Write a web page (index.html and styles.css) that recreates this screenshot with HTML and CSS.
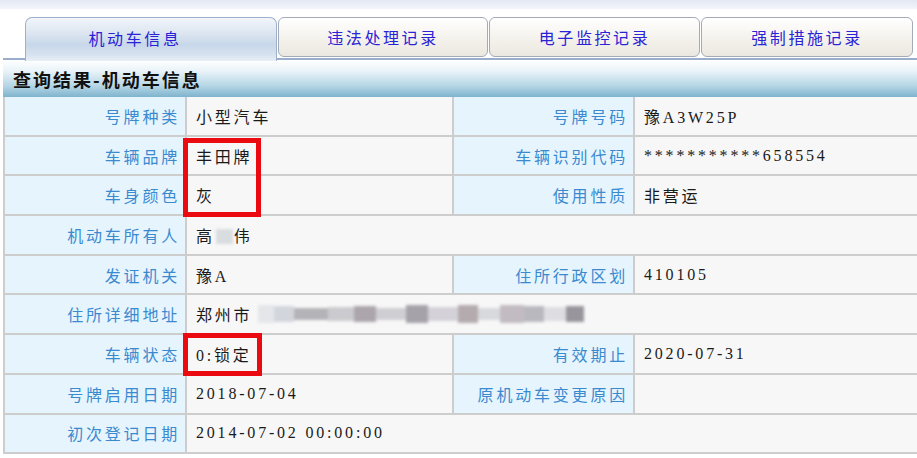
FILE: index.html
```html
<!DOCTYPE html>
<html lang="zh-CN">
<head>
<meta charset="utf-8">
<title>机动车信息</title>
<link rel="stylesheet" href="styles.css">
</head>
<body>
<div class="page">
  <div class="topband"></div>
  <div class="tabs">
    <div class="tab active">机动车信息</div>
    <div class="tab">违法处理记录</div>
    <div class="tab">电子监控记录</div>
    <div class="tab">强制措施记录</div>
  </div>
  <div class="panel">
    <div class="panel-title">查询结果-机动车信息</div>
    <table class="info">
      <colgroup>
        <col class="c1"><col class="c2"><col class="c3"><col class="c4">
      </colgroup>
      <tr><td class="lbl">号牌种类</td><td class="val">小型汽车</td><td class="lbl">号牌号码</td><td class="val">豫A3W25P</td></tr>
      <tr><td class="lbl">车辆品牌</td><td class="val">丰田牌</td><td class="lbl">车辆识别代码</td><td class="val">***********658554</td></tr>
      <tr><td class="lbl">车身颜色</td><td class="val">灰</td><td class="lbl">使用性质</td><td class="val">非营运</td></tr>
      <tr><td class="lbl">机动车所有人</td><td class="val" colspan="3">高<span class="blur-char"></span>伟</td></tr>
      <tr><td class="lbl">发证机关</td><td class="val">豫A</td><td class="lbl">住所行政区划</td><td class="val">410105</td></tr>
      <tr><td class="lbl">住所详细地址</td><td class="val" colspan="3"><span class="addr">郑州市<span class="blur-addr"><i class="b1"></i><i class="b2"></i><i class="b3"></i><i class="b4"></i><i class="b5"></i><i class="b6"></i><i class="b7"></i><i class="b8"></i><i class="b9"></i><i class="b10"></i><i class="b11"></i><i class="b12"></i><i class="b13"></i><i class="b14"></i></span></span></td></tr>
      <tr><td class="lbl">车辆状态</td><td class="val">0:锁定</td><td class="lbl">有效期止</td><td class="val">2020-07-31</td></tr>
      <tr><td class="lbl">号牌启用日期</td><td class="val">2018-07-04</td><td class="lbl">原机动车变更原因</td><td class="val"></td></tr>
      <tr><td class="lbl">初次登记日期</td><td class="val" colspan="3">2014-07-02 00:00:00</td></tr>
    </table>
  </div>
  <div class="mark mark-brand"></div>
  <div class="mark mark-status"></div>
</div>
</body>
</html>
```
FILE: styles.css
```css
html, body {
  margin: 0;
  padding: 0;
  background: #ffffff;
  overflow: hidden;
}
.page {
  position: relative;
  width: 917px;
  height: 458px;
  overflow: hidden;
  font-family: "Liberation Serif", "Noto Sans CJK SC", serif;
}
.topband {
  height: 9px;
  background: linear-gradient(#e3e8f2, #f3f5fa);
}
.tabs {
  display: flex;
  align-items: flex-end;
  height: 49px;
  margin-left: 3px;
  padding-left: 22px;
  border-bottom: 2px solid #9aaecb;
  gap: 1px;
}
.tab {
  box-sizing: border-box;
  height: 40px;
  margin-bottom: 1px;
  display: flex;
  align-items: center;
  justify-content: center;
  border: 1px solid #a3abb8;
  border-radius: 6px;
  background: linear-gradient(#ffffff 0%, #f6f4ef 45%, #ebe8e0 100%);
  color: #2a22d6;
  font-family: "Noto Sans CJK SC", sans-serif;
  font-size: 16px;
  letter-spacing: 2.6px;
  width: 210px;
}
.tab.active {
  width: 252px;
  height: 44px;
  margin-bottom: -3px;
  border-color: #9db1cb;
  border-bottom: none;
  border-radius: 7px 7px 0 0;
  background: linear-gradient(#f2f5fa 0%, #dde6f1 35%, #c8d7e9 62%, #d7e2ef 85%, #e9eff6 100%);
  position: relative;
  z-index: 2;
  padding-bottom: 4px;
  padding-right: 32px;
}
.tab:nth-child(2) { width: 210px; }
.tab:nth-child(3) { width: 211px; }
.tab:nth-child(4) { width: 212px; }
.panel {
  margin-left: 3px;
}
.panel-title {
  height: 37px;
  box-sizing: border-box;
  padding-left: 10px;
  display: flex;
  align-items: center;
  background: linear-gradient(#ffffff 0%, #e9f3f8 30%, #b5d6e5 70%, #7fb3cd 100%);
  font-family: "Noto Sans CJK SC", sans-serif;
  font-weight: bold;
  font-size: 18px;
  letter-spacing: 2px;
  color: #111;
}
.info {
  border-collapse: collapse;
  table-layout: fixed;
  width: 930px;
  font-size: 16px;
}
.c1 { width: 182px; }
.c2 { width: 267px; }
.c3 { width: 181px; }
.c4 { width: 300px; }
.info td {
  border: 2px solid #cdcdcd;
  height: 37.7px;
  padding: 0;
  letter-spacing: 2.8px;
  white-space: nowrap;
  overflow: hidden;
}
.info tr:first-child td { border-top: none; }
.info td.lbl {
  background: #e6f5fd;
  color: #3b8ad0;
  text-align: right;
  padding-right: 5px;
}
.info td.val {
  background: #f7f7f7;
  color: #1a1a1a;
  padding-left: 9px;
}
.blur-char {
  display: inline-block;
  width: 17px;
  height: 15px;
  margin: 0 1px;
  vertical-align: -2px;
  background: #d9dde0;
  filter: blur(1.5px);
}
.addr {
  display: inline-flex;
  align-items: center;
}
.blur-addr {
  display: inline-flex;
  align-items: center;
  margin-left: 6px;
  filter: blur(1.4px);
}
.blur-addr i {
  display: block;
  height: 18px;
  width: 24px;
  background: #c9c9cc;
}
.blur-addr .b1 { width: 16px; background: #e4e6ea; height: 18px; }
.blur-addr .b2 { width: 20px; background: #d2d6dc; height: 16px; }
.blur-addr .b3 { width: 34px; background: #b4b4b8; height: 12px; }
.blur-addr .b4 { width: 26px; background: #cbcbcf; height: 14px; }
.blur-addr .b5 { width: 22px; background: #aca6ac; height: 16px; }
.blur-addr .b6 { width: 30px; background: #cfcfd3; height: 12px; }
.blur-addr .b7 { width: 22px; background: #a6a2aa; height: 18px; }
.blur-addr .b8 { width: 30px; background: #d4d2d8; height: 14px; }
.blur-addr .b9 { width: 20px; background: #b4abae; height: 18px; }
.blur-addr .b10 { width: 22px; background: #d8d9dd; height: 12px; }
.blur-addr .b11 { width: 24px; background: #c2bcc2; height: 18px; }
.blur-addr .b12 { width: 20px; background: #b9b8bf; height: 16px; }
.blur-addr .b13 { width: 22px; background: #dedee2; height: 14px; }
.blur-addr .b14 { width: 18px; background: #98959c; height: 16px; }
.mark {
  position: absolute;
  box-sizing: border-box;
  border: 5px solid #ea0a10;
}
.mark-brand {
  left: 183px;
  top: 138px;
  width: 78px;
  height: 79px;
}
.mark-status {
  left: 183px;
  top: 333px;
  width: 79px;
  height: 43px;
}
```
